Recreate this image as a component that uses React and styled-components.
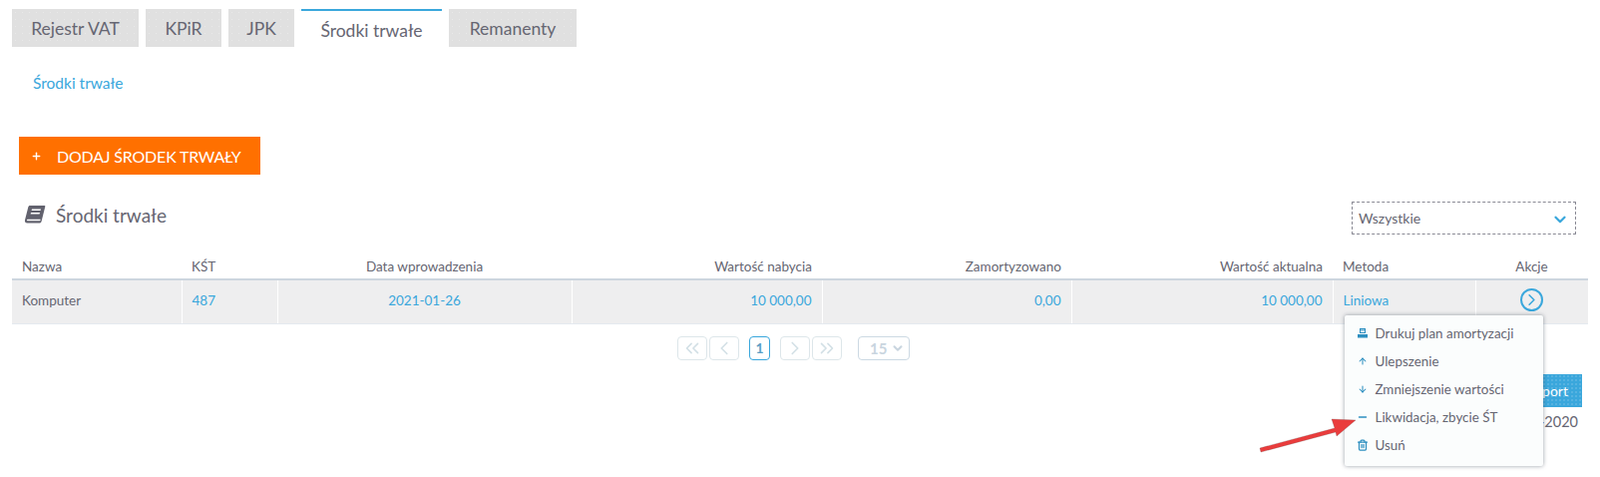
import styled, { createGlobalStyle } from "styled-components"
import { ChevronDown, ChevronLeft, ChevronRight, ChevronsLeft, ChevronsRight, ArrowUp, ArrowDown, Minus, Trash2, Plus } from "lucide-react"

const blue = '#3aa7dc'
const text = '#666672'

const GlobalStyle = createGlobalStyle`
  body {
    margin: 0;
    background: #fff;
    color: ${text};
    font-family: "Lato", "Liberation Sans", sans-serif;
    font-size: 13px;
  }
`

const Page = styled.div`
  position: relative;
  width: 1604px;
  height: 478px;
  overflow: hidden;
  padding: 9px 12px 0;
  box-sizing: border-box;
`

const dots = `radial-gradient(rgba(255, 255, 255, 0.3) 0.6px, transparent 0.8px)`

const Tabs = styled.div`
  display: flex;
  gap: 7px;
  height: 38px;
`

const Tab = styled.div`
  width: ${({ $w }) => $w}px;
  box-sizing: border-box;
  display: flex;
  align-items: center;
  justify-content: center;
  font-size: 17.5px;
  background-color: ${({ $active }) => ($active ? '#fff' : '#e0e0e0')};
  background-image: ${({ $active }) => ($active ? 'none' : dots)};
  background-size: 7px 7px;
  border-top: ${({ $active }) => ($active ? `2px solid ${blue}` : 'none')};
  padding-top: ${({ $active }) => ($active ? '2px' : '0')};
`

const Crumb = styled.a`
  display: block;
  margin: 27px 0 0 21px;
  color: ${blue};
  font-size: 15.5px;
  line-height: 18px;
`

const AddButton = styled.div`
  display: flex;
  align-items: center;
  width: 242px;
  height: 38px;
  margin: 45px 0 0 7px;
  background: #ff7000;
  color: #fff;
  font-size: 16px;
  letter-spacing: -0.2px;
  white-space: nowrap;
  padding-left: 12px;
  box-sizing: border-box;
  gap: 15px;
`

const TitleRow = styled.div`
  display: flex;
  align-items: center;
  justify-content: space-between;
  height: 33px;
  margin-top: 27px;
  padding: 0 0 0 12px;
`

const Title = styled.h2`
  display: flex;
  align-items: center;
  gap: 10px;
  margin: 0;
  padding-bottom: 7px;
  font-size: 19px;
  font-weight: 400;
`

const FilterSelect = styled.div`
  display: flex;
  align-items: center;
  justify-content: space-between;
  width: 225px;
  height: 33px;
  margin-right: 12px;
  padding: 2px 6px 0;
  box-sizing: border-box;
  border: 1px dashed #8a8a95;
  font-size: 14px;
  color: ${blue};
  & > span {
    color: ${text};
    margin-top: -3px;
  }
`

const Table = styled.table`
  width: 1580px;
  margin-top: 17px;
  border-collapse: collapse;
  table-layout: fixed;
`

const HeadCell = styled.th`
  height: 28px;
  box-sizing: border-box;
  padding: 2px 10px 0;
  font-size: 13.5px;
  font-weight: 400;
  text-align: ${({ $align }) => $align || 'left'};
  border-bottom: 2px solid #cdd6df;
`

const Cell = styled.td`
  position: relative;
  height: 44px;
  padding: 0 10px 3px;
  box-sizing: border-box;
  font-size: 13.5px;
  background: #eeeeef;
  color: ${({ $link }) => ($link ? blue : text)};
  text-align: ${({ $align }) => $align || 'left'};
  border-left: ${({ $first }) => ($first ? 'none' : '1px solid #fff')};
  border-bottom: 1px solid #e4e9ef;
`

const RoundButton = styled.div`
  display: flex;
  align-items: center;
  justify-content: center;
  width: 23px;
  height: 23px;
  margin: 0 auto;
  box-sizing: border-box;
  border: 2px solid ${blue};
  border-radius: 50%;
  color: ${blue};
`

const Menu = styled.ul`
  position: absolute;
  top: 35px;
  left: -132px;
  width: 199px;
  height: 151px;
  margin: 0;
  padding: 4px 0 0;
  box-sizing: border-box;
  list-style: none;
  background: #fbfdfd;
  border-radius: 2px;
  box-shadow: 0 0 4px rgba(70, 80, 95, 0.55);
  z-index: 2;
`

const MenuItem = styled.li`
  display: flex;
  align-items: center;
  height: 28px;
  padding-left: 12px;
  font-size: 13.4px;
  color: ${text};
`

const MenuIcon = styled.span`
  display: flex;
  justify-content: center;
  width: 12px;
  margin-right: 7px;
  color: #2d8fc0;
`

const Pagination = styled.div`
  display: flex;
  align-items: center;
  justify-content: center;
  padding-right: 13px;
  height: 24px;
  margin-top: 12px;
`

const PageButton = styled.div`
  display: flex;
  align-items: center;
  justify-content: center;
  width: ${({ $w }) => $w || 30}px;
  height: 24px;
  box-sizing: border-box;
  margin: ${({ $m }) => $m || '0'};
  border: 1px solid ${({ $active }) => ($active ? blue : '#dde6ea')};
  border-radius: 4px;
  font-size: 14px;
  font-weight: 700;
  color: ${({ $active }) => ($active ? '#5b9fc6' : '#d3e0e6')};
`

const PageSize = styled.div`
  display: flex;
  align-items: center;
  justify-content: space-between;
  width: 52px;
  height: 24px;
  box-sizing: border-box;
  margin-left: 16px;
  padding: 0 4px 0 11px;
  border: 1px solid #ccd9e3;
  border-radius: 4px;
  font-size: 15px;
  font-weight: 700;
  color: #c9d5df;
`

const Footer = styled.div`
  display: flex;
  flex-direction: column;
  align-items: flex-end;
  margin: 14px 6px 0 0;
`

const ExportButton = styled.div`
  display: flex;
  align-items: center;
  justify-content: flex-end;
  width: 120px;
  height: 33px;
  padding-right: 14px;
  box-sizing: border-box;
  font-size: 14px;
  color: #fff;
  background-color: ${blue};
  background-image: ${dots};
  background-size: 4px 4px;
`

const Period = styled.div`
  margin: 6px 4px 0 0;
  font-size: 14.5px;
  line-height: 17px;
`

const Arrow = styled.svg`
  position: absolute;
  left: 1255px;
  top: 412px;
  z-index: 3;
`

const columns = [170, 96, 295, 251, 250, 262, 143, 113]

const BookIcon = () => (
  <svg width="22" height="22" viewBox="0 0 22 22" fill="#62626e">
    <path d="M6 2h14.500c.6 0 1 .5.8 1.100l-3.700 14.600c-.3 1.100-1 1.800-2.200 1.800H3.300C1.600 19.500.6 18 1 16.400L4.300 3.500C4.500 2.600 5.100 2 6 2Z" />
    <path d="M8 5.500h9l-.4 1.600h-9ZM7 9h9l-.4 1.500h-9Z" fill="#fff" />
    <path d="M3.700 15.800h13L16.300 17.300H3.500c-.8 0-.7-1.500.2-1.500Z" fill="#fff" />
  </svg>
)

const PrintIcon = () => (
  <svg width="12" height="12" viewBox="0 0 12 12" fill="#2d8fc0">
    <path d="M3 1h6v5H3ZM1 7h10v3.500H1Z" />
    <path d="M4 2.500h4v1H4ZM4 4h4v1H4Z" fill="#fff" />
  </svg>
)

export default function App() {
  return (
    <Page>
      <GlobalStyle />
      <Tabs>
        <Tab $w={127}>Rejestr VAT</Tab>
        <Tab $w={76}>KPiR</Tab>
        <Tab $w={66}>JPK</Tab>
        <Tab $w={141} $active>Środki trwałe</Tab>
        <Tab $w={128}>Remanenty</Tab>
      </Tabs>
      <Crumb>Środki trwałe</Crumb>
      <AddButton>
        <Plus size={11} strokeWidth={3} />
        DODAJ ŚRODEK TRWAŁY
      </AddButton>
      <TitleRow>
        <Title><BookIcon />Środki trwałe</Title>
        <FilterSelect>
          <span>Wszystkie</span>
          <ChevronDown size={18} strokeWidth={3} />
        </FilterSelect>
      </TitleRow>
      <Table>
        <colgroup>
          {columns.map((w, i) => <col key={i} width={w} />)}
        </colgroup>
        <thead>
          <tr>
            <HeadCell>Nazwa</HeadCell>
            <HeadCell>KŚT</HeadCell>
            <HeadCell $align="center">Data wprowadzenia</HeadCell>
            <HeadCell $align="right">Wartość nabycia</HeadCell>
            <HeadCell $align="right">Zamortyzowano</HeadCell>
            <HeadCell $align="right">Wartość aktualna</HeadCell>
            <HeadCell>Metoda</HeadCell>
            <HeadCell $align="center">Akcje</HeadCell>
          </tr>
        </thead>
        <tbody>
          <tr>
            <Cell $first>Komputer</Cell>
            <Cell $link>487</Cell>
            <Cell $link $align="center">2021-01-26</Cell>
            <Cell $link $align="right">10 000,00</Cell>
            <Cell $link $align="right">0,00</Cell>
            <Cell $link $align="right">10 000,00</Cell>
            <Cell $link>Liniowa</Cell>
            <Cell>
              <RoundButton><ChevronRight size={19} strokeWidth={2} /></RoundButton>
              <Menu>
                <MenuItem><MenuIcon><PrintIcon /></MenuIcon>Drukuj plan amortyzacji</MenuItem>
                <MenuItem><MenuIcon><ArrowUp size={10} strokeWidth={2.500} /></MenuIcon>Ulepszenie</MenuItem>
                <MenuItem><MenuIcon><ArrowDown size={10} strokeWidth={2.500} /></MenuIcon>Zmniejszenie wartości</MenuItem>
                <MenuItem><MenuIcon><Minus size={12} strokeWidth={3} /></MenuIcon>Likwidacja, zbycie ŚT</MenuItem>
                <MenuItem><MenuIcon><Trash2 size={12} strokeWidth={2.500} /></MenuIcon>Usuń</MenuItem>
              </Menu>
            </Cell>
          </tr>
        </tbody>
      </Table>
      <Pagination>
        <PageButton><ChevronsLeft size={22} strokeWidth={1.800} /></PageButton>
        <PageButton $m="0 0 0 2px"><ChevronLeft size={22} strokeWidth={1.800} /></PageButton>
        <PageButton $active $w={21} $m="0 10px">1</PageButton>
        <PageButton><ChevronRight size={22} strokeWidth={1.800} /></PageButton>
        <PageButton $m="0 0 0 2px"><ChevronsRight size={22} strokeWidth={1.800} /></PageButton>
        <PageSize>15<ChevronDown size={14} strokeWidth={3.500} /></PageSize>
      </Pagination>
      <Footer>
        <ExportButton>Eksport</ExportButton>
        <Period>-2020</Period>
      </Footer>
      <Arrow width="110" height="45" viewBox="0 0 110 45">
        <path d="M8 37 L83 17 L80 8 L104 9 L85 25 L84 21 L9 41 Z" fill="#ea3c3c" stroke="rgba(90,60,60,0.3)" strokeWidth="0.8" />
      </Arrow>
    </Page>
  )
}
